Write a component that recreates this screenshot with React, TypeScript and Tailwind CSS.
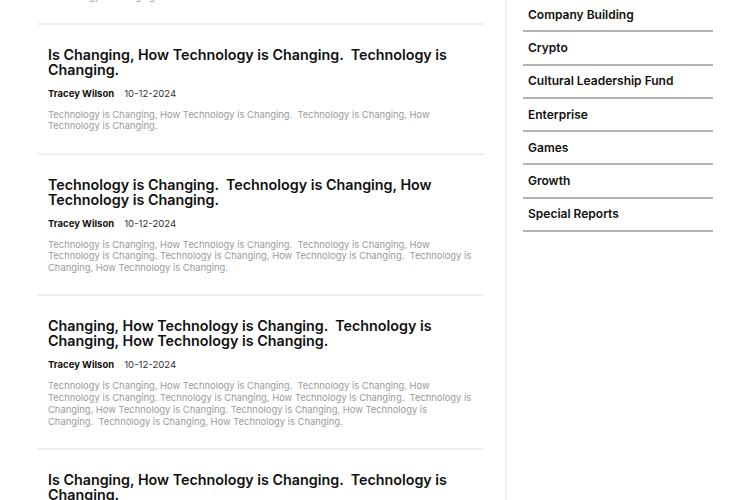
import React from "react";

const font = { fontFamily: 'Inter, "Noto Sans", sans-serif' };

const articles = [
  {
    title: "Is Changing, How Technology is Changing.  Technology is Changing.",
    excerpt:
      "Technology is Changing, How Technology is Changing.  Technology is Changing, How Technology is Changing.",
  },
  {
    title: "Technology is Changing.  Technology is Changing, How Technology is Changing.",
    excerpt:
      "Technology is Changing, How Technology is Changing.  Technology is Changing, How Technology is Changing. Technology is Changing, How Technology is Changing.  Technology is Changing, How Technology is Changing.",
  },
  {
    title: "Changing, How Technology is Changing.  Technology is Changing, How Technology is Changing.",
    excerpt:
      "Technology is Changing, How Technology is Changing.  Technology is Changing, How Technology is Changing. Technology is Changing, How Technology is Changing.  Technology is Changing, How Technology is Changing. Technology is Changing, How Technology is Changing.  Technology is Changing, How Technology is Changing.",
  },
  {
    title: "Is Changing, How Technology is Changing.  Technology is Changing.",
    excerpt:
      "Technology is Changing, How Technology is Changing.  Technology is Changing, How Technology is Changing.",
  },
];

const categories = [
  "Company Building",
  "Crypto",
  "Cultural Leadership Fund",
  "Enterprise",
  "Games",
  "Growth",
  "Special Reports",
];

export default function App() {
  return (
    <div className="w-[750px] h-[500px] overflow-hidden bg-white" style={font}>
      <div className="flex">
        <div className="ml-[37px] w-[447px] mt-[-9px]">
          <div className="border-b-2 border-[#efefef] px-[11px] pb-[20px]">
            <p className="text-[9.4px] leading-[11.7px] text-[#9a9a9a] whitespace-pre-wrap">
              Technology is Changing.
            </p>
          </div>
          {articles.map((a, i) => (
            <div key={i} className="border-b-2 border-[#efefef] px-[11px] pt-[22px] pb-[20.6px]">
              <h2 className="text-[14.3px] leading-[15px] font-semibold text-[#111] whitespace-pre-wrap">
                {a.title}
              </h2>
              <div className="mt-[10px] flex items-center gap-[10px] h-[14px]">
                <span className="text-[9.5px] font-bold text-[#111]">Tracey Wilson</span>
                <span className="text-[9.6px] text-[#333]">10-12-2024</span>
              </div>
              <p className="mt-[8px] text-[9.4px] leading-[11.7px] text-[#9a9a9a] whitespace-pre-wrap">
                {a.excerpt}
              </p>
            </div>
          ))}
        </div>
        <div className="ml-[21px] border-l-2 border-[#f3f3f3] h-[500px] pl-[16px]">
          <ul className="w-[190px] mt-[-1px]">
            {categories.map((c) => (
              <li
                key={c}
                className="h-[33.3px] flex items-center pl-[5px] border-b-2 border-[#b3b3b3] text-[12px] font-semibold text-[#111]"
              >
                {c}
              </li>
            ))}
          </ul>
        </div>
      </div>
    </div>
  );
}
